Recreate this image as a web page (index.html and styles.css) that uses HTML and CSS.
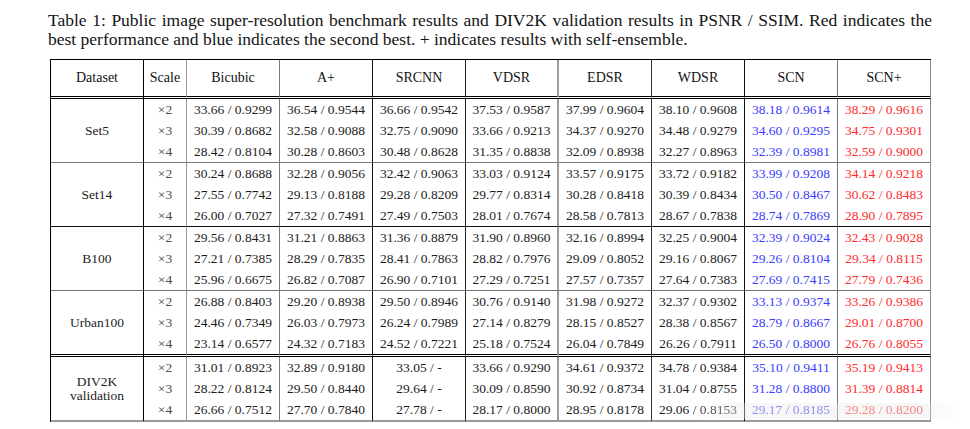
FILE: index.html
```html
<!DOCTYPE html>
<html lang="en">
<head>
<meta charset="utf-8">
<title>Table 1</title>
<link rel="stylesheet" href="styles.css">
</head>
<body>
<div class="page">
  <p class="caption">Table 1: Public image super-resolution benchmark results and DIV2K validation results in PSNR / SSIM. Red indicates the best performance and blue indicates the second best. + indicates results with self-ensemble.</p>
  <div class="table-wrap">
  <table class="results">
    <colgroup>
      <col class="c-ds"><col class="c-sc"><col class="c-m"><col class="c-m"><col class="c-m"><col class="c-m"><col class="c-m"><col class="c-m"><col class="c-m"><col class="c-m">
    </colgroup>
    <thead>
      <tr>
        <th class="b-ds">Dataset</th><th class="b-sc">Scale</th><th class="b-bi">Bicubic</th><th class="b-ap">A+</th><th class="b-sr">SRCNN</th><th class="b-vd">VDSR</th><th class="b-ed">EDSR</th><th class="b-wd">WDSR</th><th class="b-scn">SCN</th><th class="b-scp">SCN+</th>
      </tr>
    </thead>
    <tbody class="g1">
      <tr><td rowspan="3" class="ds b-ds last">Set5</td><td class="sc b-sc">×2</td><td class="b-bi">33.66 / 0.9299</td><td class="b-ap">36.54 / 0.9544</td><td class="b-sr">36.66 / 0.9542</td><td class="b-vd">37.53 / 0.9587</td><td class="b-ed">37.99 / 0.9604</td><td class="b-wd">38.10 / 0.9608</td><td class="blue b-scn">38.18 / 0.9614</td><td class="red b-scp">38.29 / 0.9616</td></tr>
      <tr><td class="sc b-sc">×3</td><td class="b-bi">30.39 / 0.8682</td><td class="b-ap">32.58 / 0.9088</td><td class="b-sr">32.75 / 0.9090</td><td class="b-vd">33.66 / 0.9213</td><td class="b-ed">34.37 / 0.9270</td><td class="b-wd">34.48 / 0.9279</td><td class="blue b-scn">34.60 / 0.9295</td><td class="red b-scp">34.75 / 0.9301</td></tr>
      <tr class="last"><td class="sc b-sc">×4</td><td class="b-bi">28.42 / 0.8104</td><td class="b-ap">30.28 / 0.8603</td><td class="b-sr">30.48 / 0.8628</td><td class="b-vd">31.35 / 0.8838</td><td class="b-ed">32.09 / 0.8938</td><td class="b-wd">32.27 / 0.8963</td><td class="blue b-scn">32.39 / 0.8981</td><td class="red b-scp">32.59 / 0.9000</td></tr>
    </tbody>
    <tbody class="g2">
      <tr><td rowspan="3" class="ds b-ds last">Set14</td><td class="sc b-sc">×2</td><td class="b-bi">30.24 / 0.8688</td><td class="b-ap">32.28 / 0.9056</td><td class="b-sr">32.42 / 0.9063</td><td class="b-vd">33.03 / 0.9124</td><td class="b-ed">33.57 / 0.9175</td><td class="b-wd">33.72 / 0.9182</td><td class="blue b-scn">33.99 / 0.9208</td><td class="red b-scp">34.14 / 0.9218</td></tr>
      <tr><td class="sc b-sc">×3</td><td class="b-bi">27.55 / 0.7742</td><td class="b-ap">29.13 / 0.8188</td><td class="b-sr">29.28 / 0.8209</td><td class="b-vd">29.77 / 0.8314</td><td class="b-ed">30.28 / 0.8418</td><td class="b-wd">30.39 / 0.8434</td><td class="blue b-scn">30.50 / 0.8467</td><td class="red b-scp">30.62 / 0.8483</td></tr>
      <tr class="last"><td class="sc b-sc">×4</td><td class="b-bi">26.00 / 0.7027</td><td class="b-ap">27.32 / 0.7491</td><td class="b-sr">27.49 / 0.7503</td><td class="b-vd">28.01 / 0.7674</td><td class="b-ed">28.58 / 0.7813</td><td class="b-wd">28.67 / 0.7838</td><td class="blue b-scn">28.74 / 0.7869</td><td class="red b-scp">28.90 / 0.7895</td></tr>
    </tbody>
    <tbody class="g3">
      <tr><td rowspan="3" class="ds b-ds last">B100</td><td class="sc b-sc">×2</td><td class="b-bi">29.56 / 0.8431</td><td class="b-ap">31.21 / 0.8863</td><td class="b-sr">31.36 / 0.8879</td><td class="b-vd">31.90 / 0.8960</td><td class="b-ed">32.16 / 0.8994</td><td class="b-wd">32.25 / 0.9004</td><td class="blue b-scn">32.39 / 0.9024</td><td class="red b-scp">32.43 / 0.9028</td></tr>
      <tr><td class="sc b-sc">×3</td><td class="b-bi">27.21 / 0.7385</td><td class="b-ap">28.29 / 0.7835</td><td class="b-sr">28.41 / 0.7863</td><td class="b-vd">28.82 / 0.7976</td><td class="b-ed">29.09 / 0.8052</td><td class="b-wd">29.16 / 0.8067</td><td class="blue b-scn">29.26 / 0.8104</td><td class="red b-scp">29.34 / 0.8115</td></tr>
      <tr class="last"><td class="sc b-sc">×4</td><td class="b-bi">25.96 / 0.6675</td><td class="b-ap">26.82 / 0.7087</td><td class="b-sr">26.90 / 0.7101</td><td class="b-vd">27.29 / 0.7251</td><td class="b-ed">27.57 / 0.7357</td><td class="b-wd">27.64 / 0.7383</td><td class="blue b-scn">27.69 / 0.7415</td><td class="red b-scp">27.79 / 0.7436</td></tr>
    </tbody>
    <tbody class="g4">
      <tr><td rowspan="3" class="ds b-ds last">Urban100</td><td class="sc b-sc">×2</td><td class="b-bi">26.88 / 0.8403</td><td class="b-ap">29.20 / 0.8938</td><td class="b-sr">29.50 / 0.8946</td><td class="b-vd">30.76 / 0.9140</td><td class="b-ed">31.98 / 0.9272</td><td class="b-wd">32.37 / 0.9302</td><td class="blue b-scn">33.13 / 0.9374</td><td class="red b-scp">33.26 / 0.9386</td></tr>
      <tr><td class="sc b-sc">×3</td><td class="b-bi">24.46 / 0.7349</td><td class="b-ap">26.03 / 0.7973</td><td class="b-sr">26.24 / 0.7989</td><td class="b-vd">27.14 / 0.8279</td><td class="b-ed">28.15 / 0.8527</td><td class="b-wd">28.38 / 0.8567</td><td class="blue b-scn">28.79 / 0.8667</td><td class="red b-scp">29.01 / 0.8700</td></tr>
      <tr class="last"><td class="sc b-sc">×4</td><td class="b-bi">23.14 / 0.6577</td><td class="b-ap">24.32 / 0.7183</td><td class="b-sr">24.52 / 0.7221</td><td class="b-vd">25.18 / 0.7524</td><td class="b-ed">26.04 / 0.7849</td><td class="b-wd">26.26 / 0.7911</td><td class="blue b-scn">26.50 / 0.8000</td><td class="red b-scp">26.76 / 0.8055</td></tr>
    </tbody>
    <tbody class="g5">
      <tr><td rowspan="3" class="ds b-ds last">DIV2K<br>validation</td><td class="sc b-sc">×2</td><td class="b-bi">31.01 / 0.8923</td><td class="b-ap">32.89 / 0.9180</td><td class="b-sr">33.05 / -</td><td class="b-vd">33.66 / 0.9290</td><td class="b-ed">34.61 / 0.9372</td><td class="b-wd">34.78 / 0.9384</td><td class="blue b-scn">35.10 / 0.9411</td><td class="red b-scp">35.19 / 0.9413</td></tr>
      <tr><td class="sc b-sc">×3</td><td class="b-bi">28.22 / 0.8124</td><td class="b-ap">29.50 / 0.8440</td><td class="b-sr">29.64 / -</td><td class="b-vd">30.09 / 0.8590</td><td class="b-ed">30.92 / 0.8734</td><td class="b-wd">31.04 / 0.8755</td><td class="blue b-scn">31.28 / 0.8800</td><td class="red b-scp">31.39 / 0.8814</td></tr>
      <tr class="last"><td class="sc b-sc">×4</td><td class="b-bi">26.66 / 0.7512</td><td class="b-ap">27.70 / 0.7840</td><td class="b-sr">27.78 / -</td><td class="b-vd">28.17 / 0.8000</td><td class="b-ed">28.95 / 0.8178</td><td class="b-wd">29.06<span class="smudge"> / 0.8153</span></td><td class="blue b-scn"><span class="smudge">29.17 / 0.8185</span></td><td class="red b-scp"><span class="smudge">29.28 / 0.8200</span></td></tr>
    </tbody>
  </table>
  <div class="watermark"></div>
  </div>
</div>
</body>
</html>
```

FILE: styles.css
```css
html, body {
  margin: 0;
  padding: 0;
  background: #ffffff;
}

.page {
  padding: 11px 0 0 48px;
  font-family: "Liberation Serif", "Times New Roman", serif;
  color: #141414;
}

.caption {
  margin: 0;
  width: 884px;
  font-size: 17.5px;
  line-height: 18.5px;
  text-align: justify;
}

.table-wrap {
  position: relative;
  margin: 11px 0 0 2px;
  width: 881px;
}

.results {
  border-collapse: separate;
  border-spacing: 0;
  table-layout: fixed;
  width: 881px;
  border-top: 1px solid #000;
  border-left: 1px solid #000;
  font-family: "Liberation Serif", "Times New Roman", serif;
  font-size: 13.5px;
  color: #1c1c1c;
}

.c-ds { width: 93px; }
.c-sc { width: 43px; }
.c-m { width: 93px; }

.results th,
.results td {
  padding: 0;
  text-align: center;
  white-space: nowrap;
  font-weight: normal;
  font-family: "Liberation Serif", "Times New Roman", serif;
}

.results th {
  height: 36px;
  border-bottom: 3px double #000;
  font-size: 14px;
  color: #111;
}

.results td {
  height: 21px;
  line-height: 21px;
}

.results td.ds {
  line-height: 14px;
  vertical-align: middle;
}

.sc {
  color: #4a4a4a;
}

.blue { color: #3b3bff; }
.red { color: #ff2b2b; }

/* vertical rules */
.b-ds { border-right: 1px solid #000; }
.b-sc { border-right: 1px solid #9a9a9a; }
.b-bi { border-right: 1px solid #7a7a7a; }
.b-ap { border-right: 1px solid #111; }
.b-sr { border-right: 1px solid #222; }
.b-vd { border-right: 2px solid #9c9c9c; }
.b-ed { border-right: 1px solid #333; }
.b-wd { border-right: 1px solid #111; }
.b-scn { border-right: 1px solid #777; }
.b-scp { border-right: 1px solid #8a8a8a; }

/* group separators */
.g1 .last td, .g1 td.last { border-bottom: 1px solid #7a7a7a; }
.g2 .last td, .g2 td.last { border-bottom: 1px solid #111; }
.g3 .last td, .g3 td.last { border-bottom: 1px solid #707070; }
.g4 .last td, .g4 td.last { border-bottom: 3px double #000; }
.g5 .last td, .g5 td.last { border-bottom: 2px solid #9a9a9a; }

.smudge {
  filter: blur(0.4px);
  opacity: 0.9;
}

.watermark {
  position: absolute;
  left: 640px;
  right: -30px;
  bottom: 3px;
  height: 16px;
  background: linear-gradient(90deg, rgba(235,235,235,0) 0%, rgba(235,235,235,0.4) 20%, rgba(235,235,235,0.4) 85%, rgba(235,235,235,0) 100%);
  pointer-events: none;
}
```
